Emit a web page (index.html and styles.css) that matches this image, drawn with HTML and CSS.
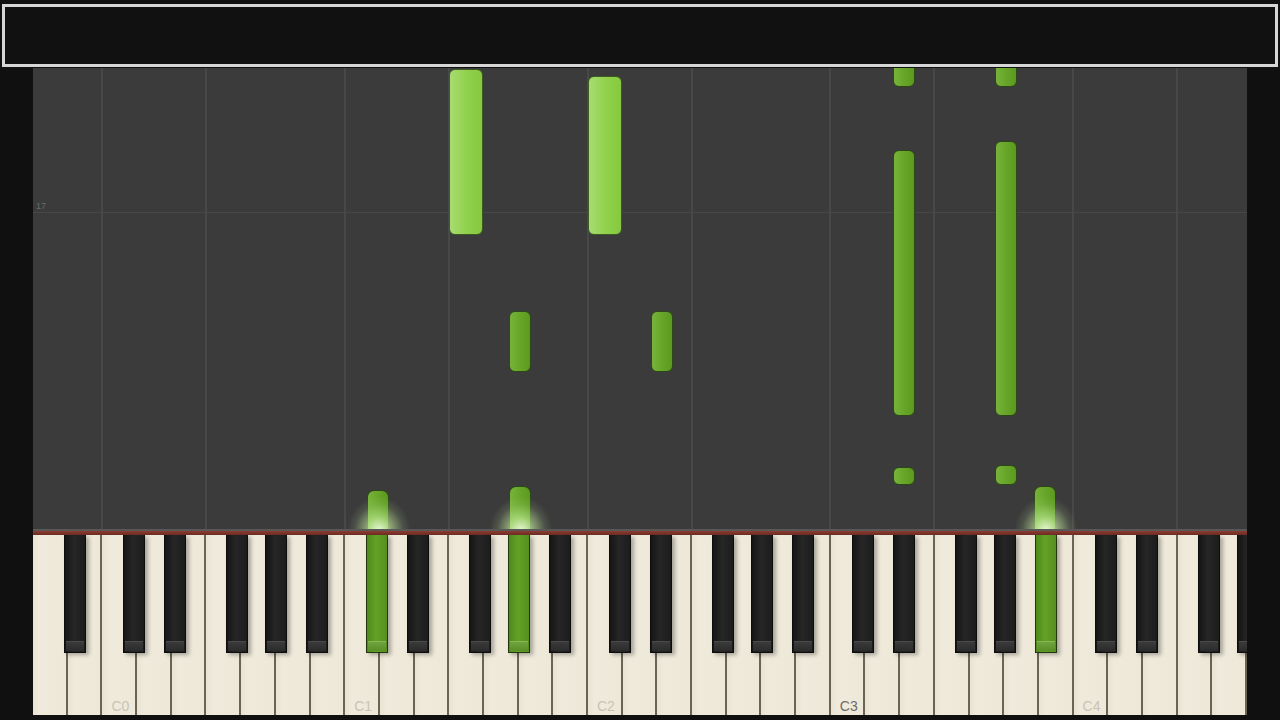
FILE: index.html
```html
<!DOCTYPE html>
<html>
<head>
    <meta charset="UTF-8">
    <title>Piano Roll</title>
    <link rel="stylesheet" href="styles.css">
</head>
<body>
    <div class="top">
        <div class="title-box"></div>
    </div>

    <div class="main">
        <div class="side"></div>
        <div class="roll">
            <!-- falling notes -->
            <div class="notes">
                <div class="measure"><span>17</span></div>

                <div class="note wide" style="left: 416px; top: 1px; height: 166px;"></div>
                <div class="note wide" style="left: 555px; top: 8px; height: 159px;"></div>

                <div class="note sharp" style="left: 476px; top: 243px; height: 61px;"></div>
                <div class="note sharp" style="left: 618px; top: 243px; height: 61px;"></div>

                <div class="note sharp" style="left: 860px; top: -10px; height: 29px;"></div>
                <div class="note sharp" style="left: 860px; top: 82px; height: 266px;"></div>
                <div class="note sharp" style="left: 860px; top: 399px; height: 18px;"></div>

                <div class="note sharp" style="left: 962px; top: -10px; height: 29px;"></div>
                <div class="note sharp" style="left: 962px; top: 73px; height: 275px;"></div>
                <div class="note sharp" style="left: 962px; top: 397px; height: 20px;"></div>

                <div class="note sharp hit" style="left: 334px; top: 422px;"></div>
                <div class="note sharp hit" style="left: 476px; top: 418px;"></div>
                <div class="note sharp hit" style="left: 1001px; top: 418px;"></div>
            </div>

            <div class="rail"></div>

            <!-- keyboard -->
            <div class="keys">
                <div class="octave first">
                    <div class="wk"></div><div class="wk"></div><div class="wk"></div><div class="wk"></div>
                    <div class="wk"></div><div class="wk"></div><div class="wk"></div>
                    <div class="bk as"></div>
                </div>
                <div class="octave">
                    <div class="wk"><span class="label">C0</span></div><div class="wk"></div><div class="wk"></div><div class="wk"></div>
                    <div class="wk"></div><div class="wk"></div><div class="wk"></div>
                    <div class="bk cs"></div><div class="bk ds"></div><div class="bk fs"></div>
                    <div class="bk gs"></div><div class="bk as"></div>
                </div>
                <div class="octave">
                    <div class="wk"><span class="label">C1</span></div><div class="wk"></div><div class="wk"></div><div class="wk"></div>
                    <div class="wk"></div><div class="wk"></div><div class="wk"></div>
                    <div class="bk cs on"></div><div class="bk ds"></div><div class="bk fs"></div>
                    <div class="bk gs on"></div><div class="bk as"></div>
                </div>
                <div class="octave">
                    <div class="wk"><span class="label">C2</span></div><div class="wk"></div><div class="wk"></div><div class="wk"></div>
                    <div class="wk"></div><div class="wk"></div><div class="wk"></div>
                    <div class="bk cs"></div><div class="bk ds"></div><div class="bk fs"></div>
                    <div class="bk gs"></div><div class="bk as"></div>
                </div>
                <div class="octave">
                    <div class="wk"><span class="label mid">C3</span></div><div class="wk"></div><div class="wk"></div><div class="wk"></div>
                    <div class="wk"></div><div class="wk"></div><div class="wk"></div>
                    <div class="bk cs"></div><div class="bk ds"></div><div class="bk fs"></div>
                    <div class="bk gs"></div><div class="bk as on"></div>
                </div>
                <div class="octave">
                    <div class="wk"><span class="label">C4</span></div><div class="wk"></div><div class="wk"></div><div class="wk"></div>
                    <div class="wk"></div><div class="wk"></div><div class="wk"></div>
                    <div class="bk cs"></div><div class="bk ds"></div><div class="bk fs"></div>
                    <div class="bk gs"></div><div class="bk as"></div>
                </div>
            </div>
            <div class="bottom"></div>
        </div>
        <div class="side"></div>
    </div>
</body>
</html>
```

FILE: styles.css
```css
* {
    box-sizing: border-box;
}

body {
    margin: 0;
    width: 1280px;
    height: 720px;
    overflow: hidden;
    background-color: #101010;
    font-family: "Liberation Sans", Arial, sans-serif;
}

.top {
    height: 68px;
    padding: 4px 2px 1px 2px;
}

.title-box {
    height: 100%;
    border: 3px solid #d6d6d6;
    background-color: #111;
}

.main {
    display: flex;
    height: 652px;
}

.side {
    width: 33px;
    flex: none;
    background-color: #101010;
}

.roll {
    width: 1214px;
    flex: none;
    display: flex;
    flex-direction: column;
}

/* note area */
.notes {
    position: relative;
    height: 461px;
    flex: none;
    overflow: hidden;
    background-color: #3b3b3b;
    background-image: repeating-linear-gradient(90deg,
        #484848 0 2px,
        transparent 2px 104px,
        #484848 104px 106px,
        transparent 106px 242.8px);
    background-position: 68px 0;
}

.measure {
    position: absolute;
    left: 0;
    right: 0;
    top: 144px;
    border-top: 1px solid #474747;
}

.measure span {
    position: absolute;
    left: 3px;
    top: -12px;
    font-size: 9px;
    color: #6a6a6a;
}

.note {
    position: absolute;
    border-radius: 6px;
}

.note.wide {
    width: 34px;
    background: linear-gradient(90deg, #a7dc72, #90d04a 55%, #86c940);
    border: 1px solid #3d5a22;
}

.note.sharp {
    width: 22px;
    background: linear-gradient(90deg, #77b33a, #64a326 60%, #5b9a20);
    border: 1px solid #2e4718;
}

.note.hit {
    bottom: 0;
    border-bottom: none;
    border-radius: 7px 7px 0 0;
}

.note.hit::after {
    content: "";
    position: absolute;
    left: -20px;
    bottom: -2px;
    width: 62px;
    height: 34px;
    background: radial-gradient(ellipse at 50% 100%,
        rgba(240, 255, 225, 0.95) 0,
        rgba(200, 240, 160, 0.55) 30%,
        rgba(180, 220, 150, 0.15) 55%,
        transparent 72%);
}

/* keyboard */
.rail {
    height: 6px;
    flex: none;
    border-top: 2px solid #585858;
    background: linear-gradient(#8e3b2f, #6a2d24);
}

.keys {
    position: relative;
    display: flex;
    height: 180px;
    flex: none;
    overflow: hidden;
}

.octave {
    position: relative;
    display: flex;
    flex: none;
    width: 242.8px;
}

.octave.first {
    margin-left: -173.4px;
}

.wk {
    position: relative;
    flex: 1;
    background: linear-gradient(90deg, #e8e3d2, #efeadb 20%, #ede8d8);
    border-right: 2px solid #6a6456;
}

.label {
    position: absolute;
    left: 9px;
    bottom: 2px;
    font-size: 14px;
    line-height: 14px;
    color: #c8c4b6;
}

.label.mid {
    color: #6e6c66;
}

.bk {
    position: absolute;
    top: 0;
    width: 22px;
    height: 118px;
    border: 1px solid #0d0d0d;
    border-top: none;
    background: linear-gradient(90deg, #151515, #262626 45%, #1c1c1c);
    box-shadow: 3px 2px 4px rgba(0, 0, 0, 0.3);
}

.bk::after {
    content: "";
    position: absolute;
    left: 1px;
    right: 1px;
    bottom: 1px;
    height: 9px;
    border-top: 1px solid #4a4a4a;
    background: linear-gradient(#3a3a3a, #2b2b2b);
}

.bk.on {
    border-color: #22360f;
    background: linear-gradient(90deg, #4d8a1a, #63a126 45%, #568f1e);
}

.bk.on::after {
    border-top-color: #86b85a;
    background: linear-gradient(#6fa43c, #5a8f28);
}

.cs { left: 21px; }
.ds { left: 62px; }
.fs { left: 124px; }
.gs { left: 163px; }
.as { left: 204px; }

.bottom {
    flex: 1;
    background-color: #101010;
}
```
